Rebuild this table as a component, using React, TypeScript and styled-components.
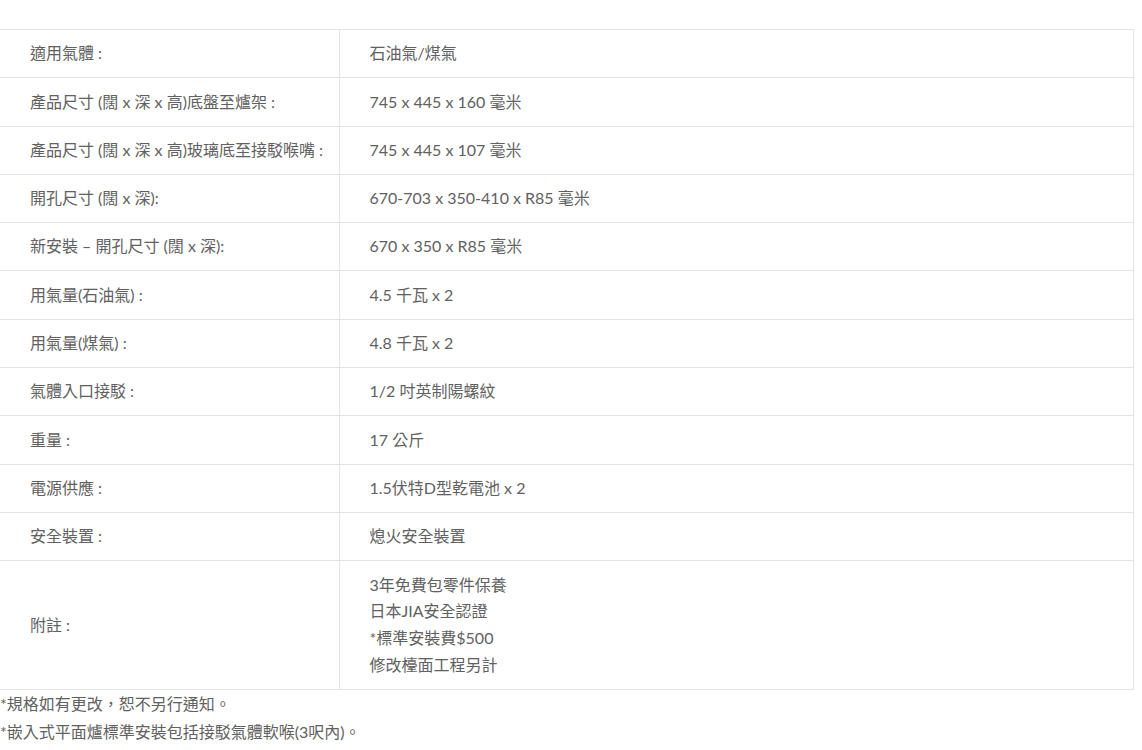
import React from "react";
import styled, { createGlobalStyle } from "styled-components";

const GlobalStyle = createGlobalStyle`
    html, body {
        margin: 0;
        padding: 0;
        background: #ffffff;
    }
    body {
        font-family: Lato, "Noto Sans CJK TC", sans-serif;
        font-size: 16px;
        color: #616161;
    }
`;

const Wrapper = styled.div`
    width: 1134px;
    padding-top: 29px;
`;

const SpecTable = styled.table`
    width: 100%;
    border-collapse: collapse;
    table-layout: fixed;
`;

const Row = styled.tr`
    border-top: 1px solid #e3e3e3;
    border-bottom: 1px solid #e3e3e3;
`;

const LabelCell = styled.td`
    width: 339px;
    padding: 10.25px 0 10.25px 30px;
    line-height: 26.8px;
    vertical-align: middle;
    white-space: nowrap;
    border-right: 1px solid #e3e3e3;
    box-sizing: border-box;
`;

const ValueCell = styled.td`
    padding: 10.25px 30px;
    line-height: 26.8px;
    vertical-align: middle;
    border-right: 1px solid #e3e3e3;
`;

const Notes = styled.div`
    display: flex;
    flex-direction: column;
`;

const Note = styled.p`
    margin: 0;
    line-height: 28px;
`;

const specs: [string, string[]][] = [
    ["適用氣體 :", ["石油氣/煤氣"]],
    ["產品尺寸 (闊 x 深 x 高)底盤至爐架 :", ["745 x 445 x 160 毫米"]],
    ["產品尺寸 (闊 x 深 x 高)玻璃底至接駁喉嘴 :", ["745 x 445 x 107 毫米"]],
    ["開孔尺寸 (闊 x 深):", ["670-703 x 350-410 x R85 毫米"]],
    ["新安裝 – 開孔尺寸 (闊 x 深):", ["670 x 350 x R85 毫米"]],
    ["用氣量(石油氣) :", ["4.5 千瓦 x 2"]],
    ["用氣量(煤氣) :", ["4.8 千瓦 x 2"]],
    ["氣體入口接駁 :", ["1/2 吋英制陽螺紋"]],
    ["重量 :", ["17 公斤"]],
    ["電源供應 :", ["1.5伏特D型乾電池 x 2"]],
    ["安全裝置 :", ["熄火安全裝置"]],
    ["附註 :", ["3年免費包零件保養", "日本JIA安全認證", "*標準安裝費$500", "修改檯面工程另計"]],
];

export default function App() {
    return (
        <Wrapper>
            <GlobalStyle />
            <SpecTable>
                <tbody>
                    {specs.map(([label, values]) => (
                        <Row key={label}>
                            <LabelCell>{label}</LabelCell>
                            <ValueCell>
                                {values.map((v, i) => (
                                    <React.Fragment key={v}>
                                        {i > 0 && <br />}
                                        {v}
                                    </React.Fragment>
                                ))}
                            </ValueCell>
                        </Row>
                    ))}
                </tbody>
            </SpecTable>
            <Notes>
                <Note>*規格如有更改，恕不另行通知。</Note>
                <Note>*嵌入式平面爐標準安裝包括接駁氣體軟喉(3呎內)。</Note>
            </Notes>
        </Wrapper>
    );
}
